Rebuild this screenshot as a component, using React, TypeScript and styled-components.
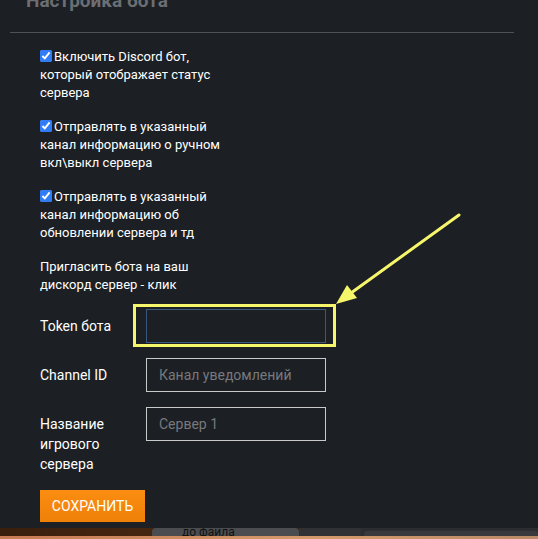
import React from 'react'
import styled, { createGlobalStyle } from 'styled-components'

const GlobalStyle = createGlobalStyle`
  html, body {
    margin: 0;
    padding: 0;
    background: #1c1f24;
    overflow: hidden;
  }
  * {
    box-sizing: border-box;
  }
`

const checks = [
  'Включить Discord бот, который отображает статус сервера',
  'Отправлять в указанный канал информацию о ручном вкл\\выкл сервера',
  'Отправлять в указанный канал информацию об обновлении сервера и тд'
]

const fields = [
  { label: 'Token бота', placeholder: '', marked: true },
  { label: 'Channel ID', placeholder: 'Канал уведомлений', marked: false },
  { label: 'Название игрового сервера', placeholder: 'Сервер 1', marked: false }
]

const App = () => {
  return (
    <Page>
      <GlobalStyle />
      <Panel>
        <Title>Настройка бота</Title>
        <Divider />
        <Body>
          {checks.map((text, i) => (
            <CheckRow key={i}>
              <Box type="checkbox" defaultChecked />
              {text}
            </CheckRow>
          ))}
          <Invite>Пригласить бота на ваш дискорд сервер - клик</Invite>
          <Form>
            {fields.map((f, i) => (
              <FieldRow key={i}>
                <Label>{f.label}</Label>
                <InputWrap>
                  <Input placeholder={f.placeholder} $focused={f.marked} />
                  {f.marked && <Highlight />}
                </InputWrap>
              </FieldRow>
            ))}
          </Form>
          <SaveBtn>Сохранить</SaveBtn>
        </Body>
      </Panel>
      <Backdrop>
        <BackRow>
          <Spacer />
          <Tab>до файла</Tab>
          <DarkBlock />
          <WideBlock>
            <Pill />
          </WideBlock>
        </BackRow>
        <Glow />
      </Backdrop>
      <Arrow width="136" height="102" viewBox="0 0 136 102">
        <line x1="129" y1="7" x2="21" y2="85" stroke="#f6f66a" strokeWidth="3" strokeLinecap="round" />
        <polygon points="6,96 27,90 17,77" fill="#f6f66a" />
      </Arrow>
    </Page>
  )
}

const Page = styled.div`
  position: relative;
  width: 538px;
  height: 539px;
  display: flex;
  flex-direction: column;
  overflow: hidden;
  font-family: Roboto, 'Liberation Sans', sans-serif;
`
const Panel = styled.div`
  flex: 1;
  background-color: #1c1f24;
  overflow: hidden;
`
const Title = styled.h4`
  margin: -9px 0 0 0;
  padding-left: 26px;
  height: 20px;
  line-height: 20px;
  font-size: 19px;
  font-weight: 700;
  color: #6b6e72;
`
const Divider = styled.div`
  margin: 21px 24px 0 10px;
  border-top: 1px solid #4f5156;
`
const Body = styled.div`
  padding: 15px 0 0 40px;
  display: flex;
  flex-direction: column;
  align-items: flex-start;
`
const CheckRow = styled.label`
  width: 188px;
  margin-bottom: 16px;
  font-size: 13px;
  line-height: 18px;
  color: #ffffff;
`
const Box = styled.input`
  width: 12px;
  height: 12px;
  margin: 0 2px 0 0;
  vertical-align: -1px;
  accent-color: #2f7cf6;
`
const Invite = styled.div`
  width: 188px;
  font-size: 13px;
  line-height: 18px;
  color: #ffffff;
`
const Form = styled.div`
  margin-top: 15px;
  display: flex;
  flex-direction: column;
  gap: 15px;
`
const FieldRow = styled.div`
  display: flex;
  align-items: flex-start;
`
const Label = styled.div`
  width: 106px;
  padding: 7px 14px 0 0;
  font-size: 14px;
  line-height: 20px;
  color: #ffffff;
`
const InputWrap = styled.div`
  position: relative;
`
const Input = styled.input<{ $focused: boolean }>`
  display: block;
  width: 180px;
  height: 34px;
  padding: 0 12px;
  background: transparent;
  border: 1px solid ${(p) => (p.$focused ? '#3a587c' : '#c9c9c9')};
  outline: none;
  font-family: Roboto, 'Liberation Sans', sans-serif;
  font-size: 14px;
  color: #ffffff;
  &::placeholder {
    color: #77797c;
  }
`
const Highlight = styled.div`
  position: absolute;
  top: -5px;
  left: -13px;
  right: -10px;
  bottom: -4px;
  border: 3px solid #f6f66a;
  pointer-events: none;
`
const SaveBtn = styled.button`
  margin-top: 16px;
  width: 105px;
  height: 32px;
  border: none;
  background: linear-gradient(#fb8d12, #ef8008);
  color: #ffffff;
  font-family: Roboto, 'Liberation Sans', sans-serif;
  font-size: 14px;
  text-transform: uppercase;
  cursor: pointer;
`
const Backdrop = styled.div`
  height: 11px;
  display: flex;
  flex-direction: column;
`
const BackRow = styled.div`
  flex: 1;
  display: flex;
  background: linear-gradient(90deg, #3a1f0d, #4a2812 40%, #3b200e 60%);
`
const Spacer = styled.div`
  width: 152px;
`
const Tab = styled.div`
  width: 147px;
  background: #4b4c4f;
  border-radius: 4px 4px 0 0;
  font-size: 12px;
  line-height: 8px;
  padding-left: 30px;
  color: #111;
  overflow: hidden;
`
const DarkBlock = styled.div`
  width: 62px;
  background: #303134;
`
const WideBlock = styled.div`
  flex: 1;
  background: #2c2d31;
  padding: 3px 0 0 3px;
`
const Pill = styled.div`
  height: 100%;
  background: #38393d;
  border-radius: 3px 3px 0 0;
`
const Glow = styled.div`
  height: 3px;
  background: linear-gradient(90deg, #c97b52, #d49a6c 60%, #b98a66);
`
const Arrow = styled.svg`
  position: absolute;
  left: 330px;
  top: 208px;
  pointer-events: none;
`

export default App
